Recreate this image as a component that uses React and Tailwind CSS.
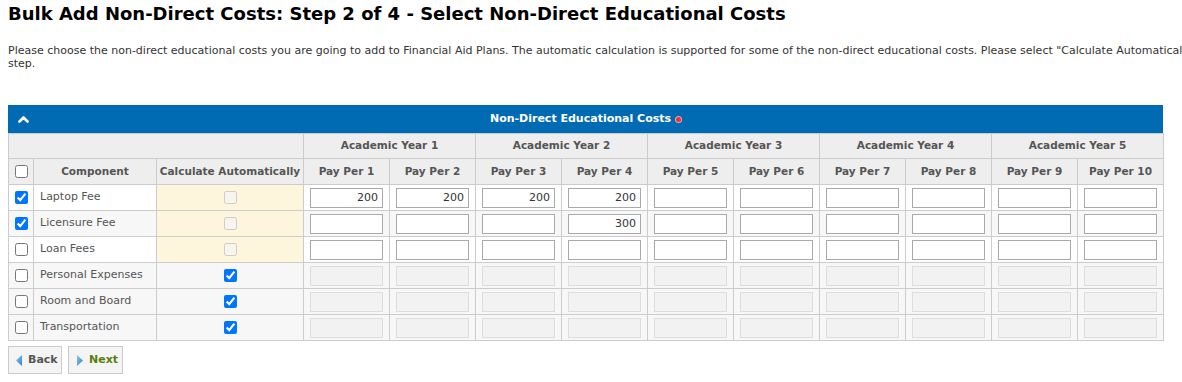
import React from "react";

const rows = [
  { name: "Laptop Fee", checked: true, auto: false, vals: ["200", "200", "200", "200", "", "", "", "", "", ""] },
  { name: "Licensure Fee", checked: true, auto: false, vals: ["", "", "", "300", "", "", "", "", "", ""] },
  { name: "Loan Fees", checked: false, auto: false, vals: ["", "", "", "", "", "", "", "", "", ""] },
  { name: "Personal Expenses", checked: false, auto: true },
  { name: "Room and Board", checked: false, auto: true },
  { name: "Transportation", checked: false, auto: true },
];

const years = [1, 2, 3, 4, 5];
const pers = [1, 2, 3, 4, 5, 6, 7, 8, 9, 10];

export default function App() {
  const font = { fontFamily: '"DejaVu Sans", Verdana, sans-serif' };
  return (
    <div className="w-[1182px] h-[382px] overflow-hidden bg-white text-[#333]" style={font}>
      <h1 className="pl-[8px] pt-[3px] text-[18px] font-bold text-black leading-[22px] whitespace-nowrap">
        Bulk Add Non-Direct Costs: Step 2 of 4 - Select Non-Direct Educational Costs
      </h1>
      <p className="pl-[8px] mt-[19px] text-[11px] leading-[13px] text-[#333] whitespace-nowrap">
        Please choose the non-direct educational costs you are going to add to Financial Aid Plans. The automatic calculation is supported for some of the non-direct educational costs. Please select "Calculate Automatically" for the costs that should be calculated in the next
        <br />
        step.
      </p>
      <div className="ml-[8px] mt-[35px] w-[1155px]">
        <div className="relative h-[28px] bg-[#006bb3] flex items-center justify-center">
          <svg className="absolute left-[10px] top-[10px]" width="11" height="8" viewBox="0 0 11 8">
            <path d="M1.5 6.5 L5.5 2.5 L9.5 6.5" fill="none" stroke="white" strokeWidth="2.6" strokeLinecap="round" strokeLinejoin="round" />
          </svg>
          <span className="text-white text-[11px] font-bold">Non-Direct Educational Costs</span>
          <span className="ml-[5px] inline-block w-[5px] h-[5px] rounded-full bg-[#e8323c] ring-1 ring-[#f8a0a0]"></span>
        </div>
        <table className="table-fixed border-collapse w-[1155px] text-[11px]">
          <colgroup>
            <col className="w-[25px]" />
            <col className="w-[123px]" />
            <col className="w-[147px]" />
            {pers.map((p) => (
              <col key={p} className="w-[86px]" />
            ))}
          </colgroup>
          <thead>
            <tr className="h-[25px] bg-[#eeeeee]">
              <th colSpan={3} className="border border-[#cccccc]"></th>
              {years.map((y) => (
                <th key={y} colSpan={2} className="border border-[#cccccc] font-bold text-[#555] text-[10.5px]">
                  Academic Year {y}
                </th>
              ))}
            </tr>
            <tr className="h-[26px] bg-[#eeeeee]">
              <th className="border border-[#cccccc]">
                <input type="checkbox" className="block mx-auto m-0" readOnly />
              </th>
              <th className="border border-[#cccccc] font-bold text-[#555] text-[10.5px]">Component</th>
              <th className="border border-[#cccccc] font-bold text-[#555] text-[10.5px]">Calculate Automatically</th>
              {pers.map((p) => (
                <th key={p} className="border border-[#cccccc] font-bold text-[#555] text-[10.5px]">
                  Pay Per {p}
                </th>
              ))}
            </tr>
          </thead>
          <tbody>
            {rows.map((r, i) => (
              <tr key={r.name} className={`h-[26px] ${i % 2 === 1 || i >= 3 ? "bg-[#f7f7f7]" : "bg-white"}`}>
                <td className="border border-[#cccccc]">
                  <input type="checkbox" defaultChecked={r.checked} className="block mx-auto m-0" />
                </td>
                <td className="border border-[#cccccc] pl-[6px] text-[#555] whitespace-nowrap">{r.name}</td>
                <td className={`border border-[#cccccc] ${r.auto ? "" : "bg-[#fdf6dc]"}`}>
                  {r.auto ? (
                    <input type="checkbox" defaultChecked className="block mx-auto m-0" />
                  ) : (
                    <input type="checkbox" disabled className="block mx-auto m-0" />
                  )}
                </td>
                {pers.map((p, j) => (
                  <td key={p} className="border border-[#cccccc] px-[6px]">
                    {r.auto ? (
                      <div className="h-[20px] w-[73px] border border-[#dddddd] bg-[#f2f2f2]"></div>
                    ) : (
                      <div className="h-[20px] w-[73px] border border-[#a9a9a9] bg-white text-right pr-[4px] leading-[18px] text-[11px] text-[#333]">
                        {r.vals[j]}
                      </div>
                    )}
                  </td>
                ))}
              </tr>
            ))}
          </tbody>
        </table>
        <div className="flex gap-[6px] mt-[5px]">
          <button className="h-[28px] w-[54px] border border-[#cccccc] bg-[#f4f4f4] flex items-center pl-[7px] gap-[6px] text-[11px] font-bold text-[#555]">
            <svg width="6" height="11" viewBox="0 0 6 11">
              <defs>
                <linearGradient id="gb" x1="0" x2="1" y1="0" y2="1">
                  <stop offset="0" stopColor="#8fc4f0" />
                  <stop offset="1" stopColor="#2a7fd4" />
                </linearGradient>
              </defs>
              <path d="M6 0 L0 5.5 L6 11 Z" fill="url(#gb)" />
            </svg>
            Back
          </button>
          <button className="h-[28px] w-[55px] border border-[#cccccc] bg-[#f4f4f4] flex items-center pl-[8px] gap-[6px] text-[11px] font-bold text-[#5b7d0a]">
            <svg width="6" height="11" viewBox="0 0 6 11">
              <defs>
                <linearGradient id="gn" x1="0" x2="1" y1="0" y2="1">
                  <stop offset="0" stopColor="#8fc4f0" />
                  <stop offset="1" stopColor="#2a7fd4" />
                </linearGradient>
              </defs>
              <path d="M0 0 L6 5.5 L0 11 Z" fill="url(#gn)" />
            </svg>
            Next
          </button>
        </div>
      </div>
    </div>
  );
}
